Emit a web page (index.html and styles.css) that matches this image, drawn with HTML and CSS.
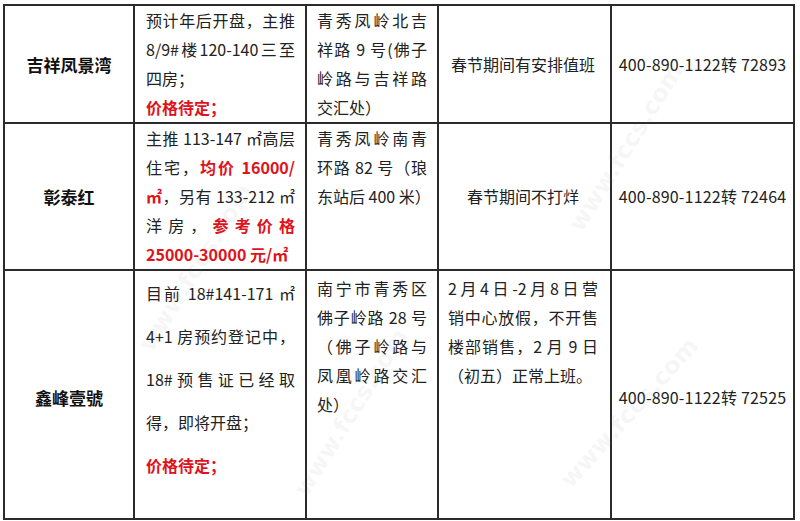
FILE: index.html
```html
<!DOCTYPE html>
<html lang="zh-CN">
<head>
<meta charset="utf-8">
<title>楼盘春节安排</title>
<link rel="stylesheet" href="styles.css">
</head>
<body>
<div class="page">
<table class="grid">
  <tr class="r1">
    <td class="c1 name">吉祥凤景湾</td>
    <td class="c2 top">
      <span class="ln j">预计年后开盘，主推</span>
      <span class="ln j">8/9#楼120-140三至</span>
      <span class="ln">四房；</span>
      <span class="ln red">价格待定；</span>
    </td>
    <td class="c3 top">
      <span class="ln j">青秀凤岭北吉</span>
      <span class="ln j">祥路 9 号(佛子</span>
      <span class="ln j">岭路与吉祥路</span>
      <span class="ln">交汇处）</span>
    </td>
    <td class="c4 mid">春节期间有安排值班</td>
    <td class="c5 mid">400-890-1122转 72893</td>
  </tr>
  <tr class="r2">
    <td class="c1 name">彰泰红</td>
    <td class="c2 top">
      <span class="ln j">主推 113-147 ㎡高层</span>
      <span class="ln j">住宅，<b class="red">均价 16000/</b></span>
      <span class="ln j"><b class="red">㎡</b>，另有 133-212 ㎡</span>
      <span class="ln j">洋房，<b class="red">参考价格</b></span>
      <span class="ln red">25000-30000 元/㎡</span>
    </td>
    <td class="c3 top">
      <span class="ln j">青秀凤岭南青</span>
      <span class="ln j">环路 82 号（琅</span>
      <span class="ln j">东站后 400 米）</span>
    </td>
    <td class="c4 mid">春节期间不打烊</td>
    <td class="c5 mid">400-890-1122转 72464</td>
  </tr>
  <tr class="r3">
    <td class="c1 name">鑫峰壹號</td>
    <td class="c2 top wide">
      <span class="ln j">目前 18#141-171 ㎡</span>
      <span class="ln j">4+1 房预约登记中，</span>
      <span class="ln j">18#预售证已经取</span>
      <span class="ln">得，即将开盘；</span>
      <span class="ln red">价格待定；</span>
    </td>
    <td class="c3 top pad">
      <span class="ln j">南宁市青秀区</span>
      <span class="ln j">佛子岭路 28 号</span>
      <span class="ln j">（佛子岭路与</span>
      <span class="ln j">凤凰岭路交汇</span>
      <span class="ln">处）</span>
    </td>
    <td class="c4 top pad">
      <span class="ln j">2月4日-2月8日营</span>
      <span class="ln j">销中心放假，不开售</span>
      <span class="ln j">楼部销售，2 月 9 日</span>
      <span class="ln">（初五）正常上班。</span>
    </td>
    <td class="c5 mid low">400-890-1122转 72525</td>
  </tr>
</table>
<span class="wm wm1">www.fccs.com</span>
<span class="wm wm2">www.fccs.com</span>
<span class="wm wm3">www.fccs.com</span>
<span class="wm wm4">www.fccs.com</span>
</div>
</body>
</html>
```

FILE: styles.css
```css
html, body {
  margin: 0;
  padding: 0;
  background: #ffffff;
}

.page {
  position: relative;
  width: 800px;
  height: 521px;
  overflow: hidden;
  padding: 4px 0 0 3px;
  box-sizing: border-box;
}

.grid {
  border-collapse: separate;
  border-spacing: 0;
  table-layout: fixed;
  width: 792px;
  border-left: 2px solid #2b2b2b;
  border-top: 2px solid #2b2b2b;
  font-family: "Noto Sans CJK SC", "Noto Sans", sans-serif;
  font-size: 16px;
  color: #222;
}

.grid td {
  box-sizing: border-box;
  border-right: 2px solid #2b2b2b;
  border-bottom: 2px solid #2b2b2b;
  padding: 0;
  line-height: 29px;
}

.r1 td { height: 118px; }
.r2 td { height: 143px; }
.r3 td { height: 249px; }

.c1 { width: 130px; }
.c2 { width: 172px; padding: 0 10px 0 11px !important; }
.c3 { width: 132px; padding: 0 10px !important; }
.c4 { width: 173px; padding: 0 12px 0 9px !important; }
.c5 { width: 183px; }

.top { vertical-align: top; }
.mid { vertical-align: middle; text-align: center; }

.name {
  text-align: center;
  vertical-align: middle;
  font-weight: 700;
  font-size: 17px;
  color: #111;
}

.r3 .name { padding-top: 6px; }

.c5 { white-space: nowrap; letter-spacing: 0.2px; }

.ln { display: block; white-space: nowrap; }
.ln.j { text-align: justify; text-align-last: justify; }

.red, b.red {
  color: #e0121b;
  font-weight: 700;
}

.wide { padding-top: 1px !important; }
.wide .ln { line-height: 43px; }

.pad { padding-top: 3px !important; }

.low { padding-top: 6px !important; }

.wm {
  position: absolute;
  font-family: "DejaVu Sans", sans-serif;
  font-size: 24px;
  font-weight: 700;
  color: rgba(120, 120, 120, 0.07);
  transform: rotate(-58deg);
  transform-origin: left center;
  white-space: nowrap;
  pointer-events: none;
}

.wm1 { left: 145px; top: 335px; }
.wm2 { left: 575px; top: 215px; }
.wm3 { left: 565px; top: 470px; transform: rotate(-48deg); }
.wm4 { left: 300px; top: 480px; }
```
